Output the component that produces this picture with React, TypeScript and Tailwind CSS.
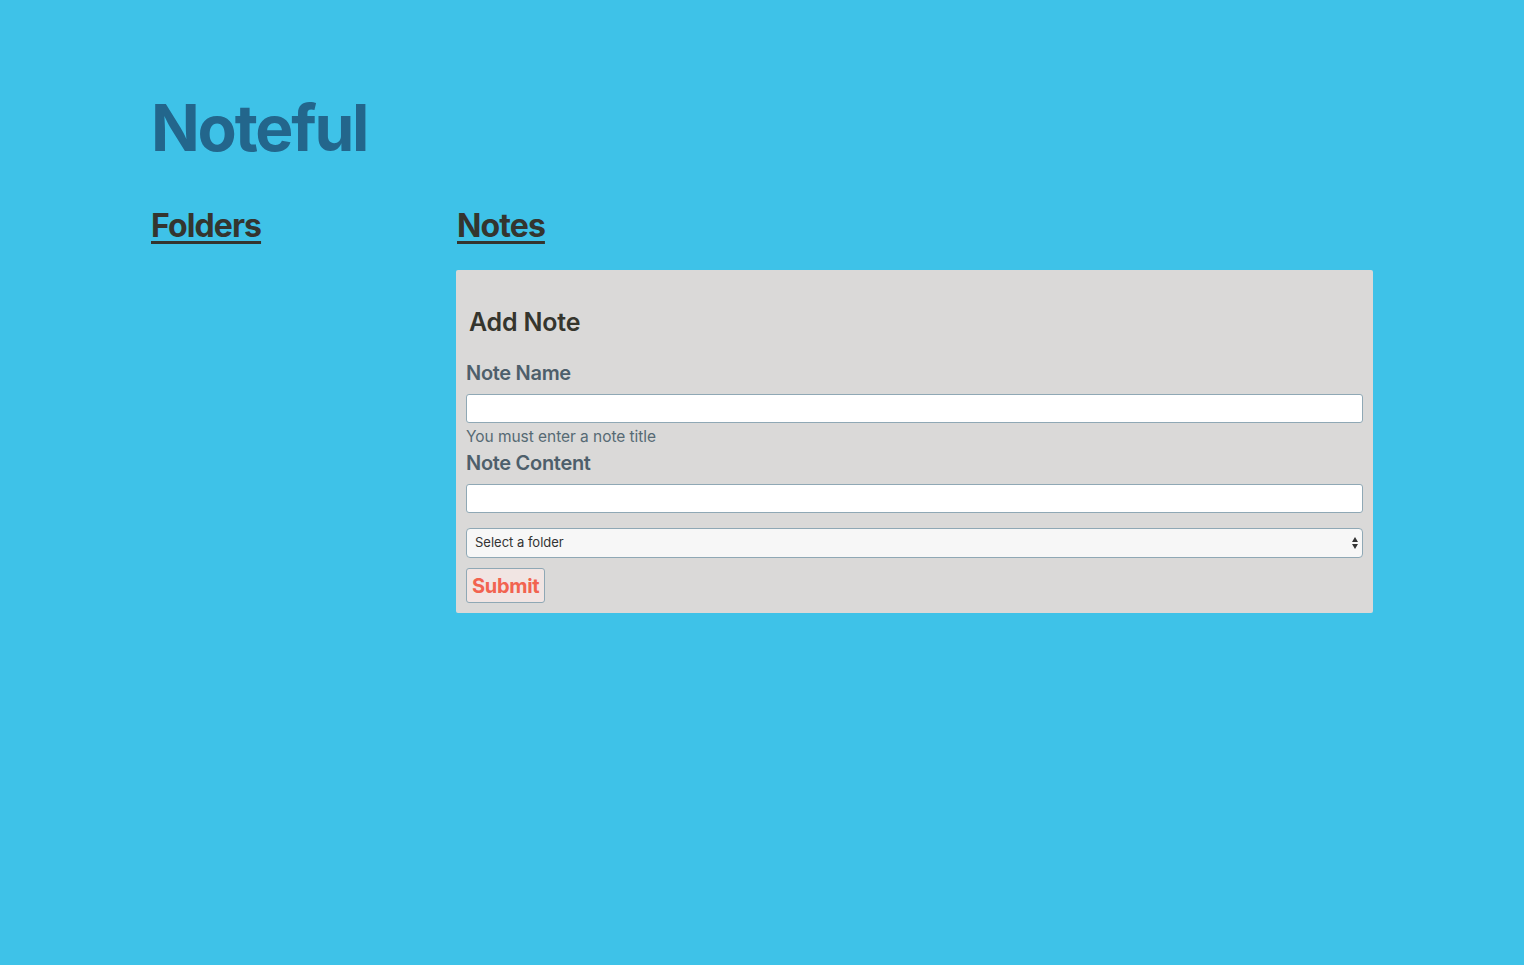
import React from "react";

function Field({ label, hint }: { label: string; hint?: string }) {
  return (
    <div className="flex flex-col">
      <label className="text-[20px] font-semibold leading-[24px] tracking-[-0.3px] text-[#4e5f6b]">{label}</label>
      <input
        type="text"
        className="mt-[9px] h-[29px] w-full rounded-[3px] border border-[#8fa8b5] bg-white px-2 outline-none"
      />
      {hint && (
        <span className="mt-[4px] text-[15.5px] leading-[20px] tracking-[-0.05px] text-[#566a74]">{hint}</span>
      )}
    </div>
  );
}

export default function App() {
  return (
    <div
      className="min-h-[965px] w-full bg-[#3ec2e8] px-[151px] pt-[88px]"
      style={{ fontFamily: "Inter, 'Noto Sans', sans-serif" }}
    >
      <h1 className="text-[64px] font-bold leading-[80px] tracking-[-2.2px] text-[#23668c]">Noteful</h1>
      <div className="mt-[38px] flex">
        <aside className="w-[305px] shrink-0">
          <h2 className="text-[32px] font-bold leading-[40px] tracking-[-0.9px] text-[#34352f] underline decoration-[3px] underline-offset-[4px]">
            Folders
          </h2>
        </aside>
        <main className="w-[917px]">
          <h2 className="pl-[1px] text-[32px] font-bold leading-[40px] tracking-[-0.9px] text-[#34352f] underline decoration-[3px] underline-offset-[4px]">
            Notes
          </h2>
          <section className="mt-[24px] rounded-[2px] bg-[#dad9d8] px-[10px] pb-[10px] pt-[37px]">
            <h3 className="pl-[3px] text-[25px] font-semibold leading-[30px] tracking-[-0.2px] text-[#35352d]">
              Add Note
            </h3>
            <form className="mt-[24px] flex flex-col" onSubmit={(e) => e.preventDefault()}>
              <Field label="Note Name" hint="You must enter a note title" />
              <div className="mt-[4px]">
                <Field label="Note Content" />
              </div>
              <div className="relative mt-[15px]">
                <select className="h-[30px] w-full appearance-none rounded-[4px] border border-[#8fa8b5] bg-[#f7f7f7] px-[8px] text-[13px] text-[#333]">
                  <option>Select a folder</option>
                </select>
                <svg
                  className="pointer-events-none absolute right-[4px] top-[8px]"
                  width="8"
                  height="14"
                  viewBox="0 0 8 14"
                >
                  <path d="M4 1 L7 6 H1 Z" fill="#333" />
                  <path d="M4 13 L7 8 H1 Z" fill="#333" />
                </svg>
              </div>
              <div className="mt-[10px]">
                <button
                  type="submit"
                  className="h-[35px] rounded-[3px] border border-[#8fa8b5] bg-[#f1e5e3] px-[5px] text-[20px] font-bold tracking-[-0.3px] text-[#f26350]"
                >
                  Submit
                </button>
              </div>
            </form>
          </section>
        </main>
      </div>
    </div>
  );
}
